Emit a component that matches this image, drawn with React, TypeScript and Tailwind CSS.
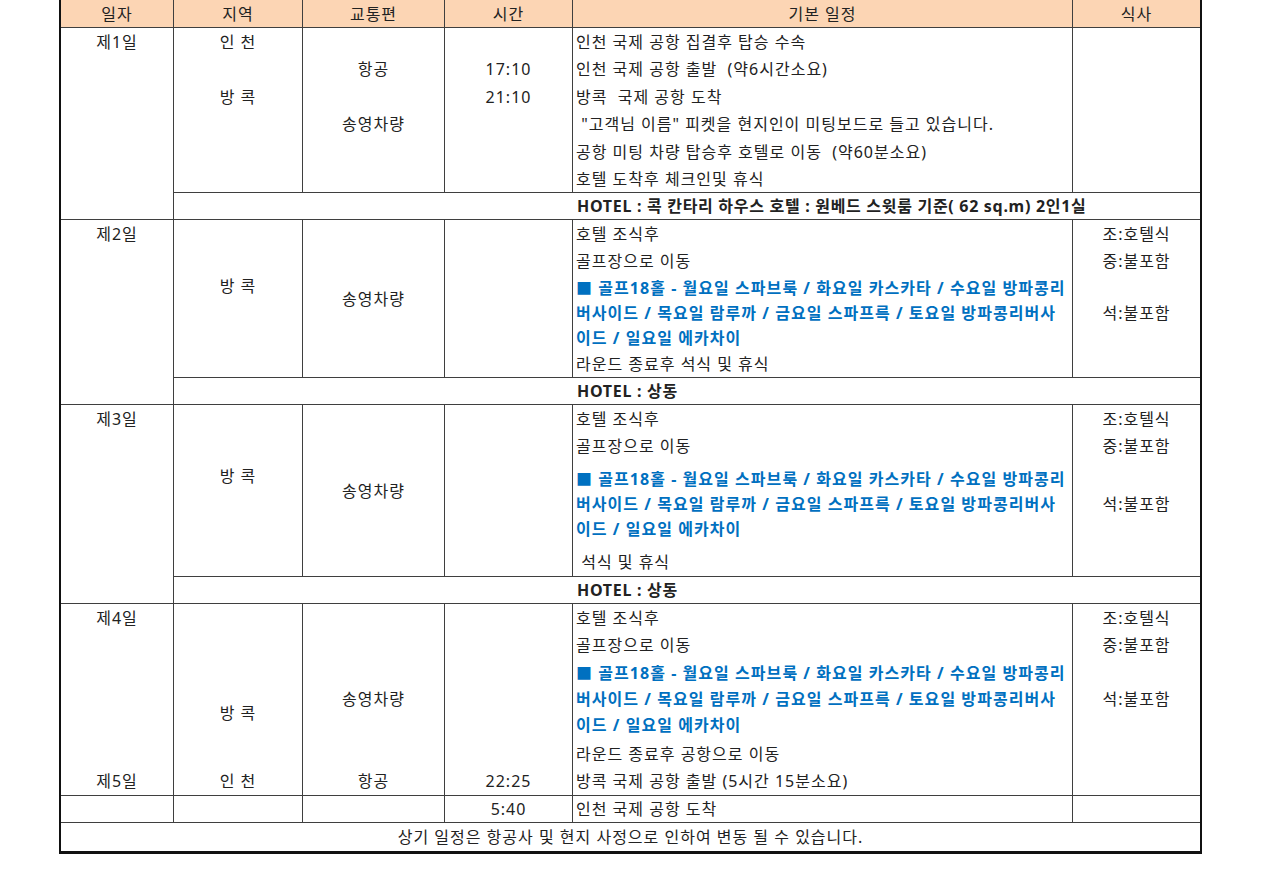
import type { ReactNode } from "react";

const LINE = "border-[#3f3f3f]";

function Cell({ h, children, left, className = "" }: { h: string; children?: ReactNode; left?: boolean; className?: string }) {
  return (
    <div className={`${h} shrink-0 flex items-center whitespace-nowrap ${left ? "justify-start pl-[3px]" : "justify-center"} ${className}`}>
      {children}
    </div>
  );
}

function Col({ w, last, children }: { w: string; last?: boolean; children?: ReactNode }) {
  return <div className={`${w} shrink-0 flex flex-col ${last ? "" : `border-r ${LINE}`}`}>{children}</div>;
}

function Golf({ h, lineH }: { h: string; lineH: string }) {
  return (
    <div className={`${h} shrink-0 flex flex-col justify-center pl-[3px] font-bold text-[#0070c0] whitespace-nowrap tracking-[1.05px]`}>
      <div className={`${lineH} flex items-center`}>■ 골프18홀 - 월요일 스파브룩 / 화요일 카스카타 / 수요일 방파콩리</div>
      <div className={`${lineH} flex items-center`}>버사이드 / 목요일 람루까 / 금요일 스파프륵 / 토요일 방파콩리버사</div>
      <div className={`${lineH} flex items-center`}>이드 / 일요일 에카차이</div>
    </div>
  );
}

function Hotel({ children }: { children: ReactNode }) {
  return (
    <div className="h-[26px] flex items-center pl-[403px] font-bold whitespace-nowrap tracking-[0.7px]">{children}</div>
  );
}

export default function App() {
  return (
    <div className="min-h-screen bg-white font-['Noto_Sans','Noto_Sans_CJK_KR',sans-serif] text-[16px] leading-[20px] tracking-[1px] text-[#222]">
      <div className="ml-[59px] w-[1143px] border-l-2 border-r-2 border-b-[3px] border-[#111] flex flex-col">
        {/* header */}
        <div className={`h-[28px] flex bg-[#fcd5b4] border-b ${LINE}`}>
          <Col w="w-[113px]"><Cell h="h-[27px]">일자</Cell></Col>
          <Col w="w-[129px]"><Cell h="h-[27px]">지역</Cell></Col>
          <Col w="w-[142px]"><Cell h="h-[27px]">교통편</Cell></Col>
          <Col w="w-[128px]"><Cell h="h-[27px]">시간</Cell></Col>
          <Col w="w-[500px]"><Cell h="h-[27px]">기본 일정</Cell></Col>
          <Col w="w-[127px]" last><Cell h="h-[27px]">식사</Cell></Col>
        </div>

        {/* day 1 */}
        <div className={`h-[192px] flex border-b ${LINE}`}>
          <Col w="w-[113px]"><Cell h="h-[27px]">제1일</Cell></Col>
          <div className="flex-1 flex flex-col">
            <div className={`h-[165px] flex border-b ${LINE}`}>
              <Col w="w-[129px]">
                <Cell h="h-[27px]">인 천</Cell>
                <Cell h="h-[28px]" />
                <Cell h="h-[27px]">방 콕</Cell>
              </Col>
              <Col w="w-[142px]">
                <Cell h="h-[27px]" />
                <Cell h="h-[28px]">항공</Cell>
                <Cell h="h-[27px]" />
                <Cell h="h-[28px]">송영차량</Cell>
              </Col>
              <Col w="w-[128px]">
                <Cell h="h-[27px]" />
                <Cell h="h-[28px]">17:10</Cell>
                <Cell h="h-[27px]">21:10</Cell>
              </Col>
              <Col w="w-[500px]">
                <Cell h="h-[27px]" left>인천 국제 공항 집결후 탑승 수속</Cell>
                <Cell h="h-[28px]" left>인천 국제 공항 출발&nbsp; (약6시간소요)</Cell>
                <Cell h="h-[27px]" left>방콕&nbsp; 국제 공항 도착</Cell>
                <Cell h="h-[28px]" left>&nbsp;"고객님 이름" 피켓을 현지인이 미팅보드로 들고 있습니다.</Cell>
                <Cell h="h-[27px]" left>공항 미팅 차량 탑승후 호텔로 이동&nbsp; (약60분소요)</Cell>
                <Cell h="h-[27px]" left>호텔 도착후 체크인및 휴식</Cell>
              </Col>
              <Col w="w-[127px]" last />
            </div>
            <Hotel>HOTEL : 콕 칸타리 하우스 호텔 : 원베드 스윗룸 기준( 62 sq.m) 2인1실</Hotel>
          </div>
        </div>

        {/* day 2 */}
        <div className={`h-[185px] flex border-b ${LINE}`}>
          <Col w="w-[113px]"><Cell h="h-[27px]">제2일</Cell></Col>
          <div className="flex-1 flex flex-col">
            <div className={`h-[158px] flex border-b ${LINE}`}>
              <Col w="w-[129px]"><Cell h="h-[131px]">방 콕</Cell></Col>
              <Col w="w-[142px]"><Cell h="h-[157px]">송영차량</Cell></Col>
              <Col w="w-[128px]" />
              <Col w="w-[500px]">
                <Cell h="h-[27px]" left>호텔 조식후</Cell>
                <Cell h="h-[28px]" left>골프장으로 이동</Cell>
                <Golf h="h-[76px]" lineH="h-[25px]" />
                <Cell h="h-[26px]" left>라운드 종료후 석식 및 휴식</Cell>
              </Col>
              <Col w="w-[127px]" last>
                <Cell h="h-[27px]">조:호텔식</Cell>
                <Cell h="h-[28px]">중:불포함</Cell>
                <Cell h="h-[76px]">석:불포함</Cell>
              </Col>
            </div>
            <Hotel>HOTEL : 상동</Hotel>
          </div>
        </div>

        {/* day 3 */}
        <div className={`h-[199px] flex border-b ${LINE}`}>
          <Col w="w-[113px]"><Cell h="h-[27px]">제3일</Cell></Col>
          <div className="flex-1 flex flex-col">
            <div className={`h-[172px] flex border-b ${LINE}`}>
              <Col w="w-[129px]"><Cell h="h-[142px]">방 콕</Cell></Col>
              <Col w="w-[142px]"><Cell h="h-[171px]">송영차량</Cell></Col>
              <Col w="w-[128px]" />
              <Col w="w-[500px]">
                <Cell h="h-[27px]" left>호텔 조식후</Cell>
                <Cell h="h-[28px]" left>골프장으로 이동</Cell>
                <Golf h="h-[87px]" lineH="h-[25px]" />
                <Cell h="h-[29px]" left>&nbsp;석식 및 휴식</Cell>
              </Col>
              <Col w="w-[127px]" last>
                <Cell h="h-[27px]">조:호텔식</Cell>
                <Cell h="h-[28px]">중:불포함</Cell>
                <Cell h="h-[87px]">석:불포함</Cell>
              </Col>
            </div>
            <Hotel>HOTEL : 상동</Hotel>
          </div>
        </div>

        {/* day 4 / 5 */}
        <div className={`h-[192px] flex border-b ${LINE}`}>
          <Col w="w-[113px]">
            <Cell h="h-[27px]">제4일</Cell>
            <Cell h="h-[136px]" />
            <Cell h="h-[28px]">제5일</Cell>
          </Col>
          <Col w="w-[129px]">
            <Cell h="h-[54px]" />
            <Cell h="h-[109px]">방 콕</Cell>
            <Cell h="h-[28px]">인 천</Cell>
          </Col>
          <Col w="w-[142px]">
            <Cell h="h-[27px]" />
            <Cell h="h-[136px]">송영차량</Cell>
            <Cell h="h-[28px]">항공</Cell>
          </Col>
          <Col w="w-[128px]">
            <Cell h="h-[163px]" />
            <Cell h="h-[28px]">22:25</Cell>
          </Col>
          <Col w="w-[500px]">
            <Cell h="h-[27px]" left>호텔 조식후</Cell>
            <Cell h="h-[27px]" left>골프장으로 이동</Cell>
            <Golf h="h-[82px]" lineH="h-[26px]" />
            <Cell h="h-[27px]" left>라운드 종료후 공항으로 이동</Cell>
            <Cell h="h-[28px]" left>방콕 국제 공항 출발 (5시간 15분소요)</Cell>
          </Col>
          <Col w="w-[127px]" last>
            <Cell h="h-[27px]">조:호텔식</Cell>
            <Cell h="h-[27px]">중:불포함</Cell>
            <Cell h="h-[82px]">석:불포함</Cell>
          </Col>
        </div>

        {/* arrival row */}
        <div className={`h-[27px] flex border-b ${LINE}`}>
          <Col w="w-[113px]" />
          <Col w="w-[129px]" />
          <Col w="w-[142px]" />
          <Col w="w-[128px]"><Cell h="h-[26px]">5:40</Cell></Col>
          <Col w="w-[500px]"><Cell h="h-[26px]" left>인천 국제 공항 도착</Cell></Col>
          <Col w="w-[127px]" last />
        </div>

        {/* footer */}
        <div className="h-[28px] flex items-center justify-center whitespace-nowrap">
          상기 일정은 항공사 및 현지 사정으로 인하여 변동 될 수 있습니다.
        </div>
      </div>
    </div>
  );
}
